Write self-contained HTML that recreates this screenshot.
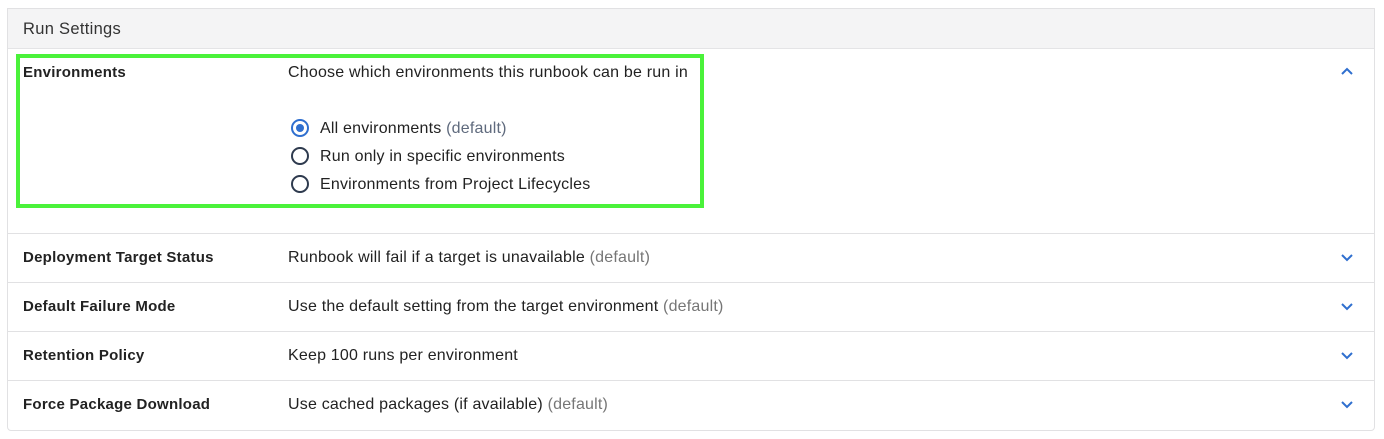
<!DOCTYPE html>
<html><head><style>
body{margin:0;background:#fff;font-family:"Liberation Sans",Arial,sans-serif;color:#222;font-size:16px;letter-spacing:0.2px;}
.card{position:absolute;left:7px;top:8px;width:1368px;height:423px;border:1px solid #e1e1e3;border-radius:0 0 4px 4px;box-sizing:border-box;}
.hdr{position:absolute;left:0;top:0;right:0;height:39px;background:#f4f4f5;border-bottom:1px solid #e4e4e6;}
.hdr span{position:absolute;left:15px;top:11px;font-size:16.5px;color:#333;letter-spacing:0.3px;}
.t{position:absolute;white-space:nowrap;}
.b{font-weight:bold;color:#222;font-size:15px;letter-spacing:0.25px;}
.g{color:#767676;}
.line{position:absolute;left:0;right:0;height:1px;background:#e1e1e3;}
.green{position:absolute;left:16px;top:54px;width:688px;height:154px;border:4px solid #4af23a;box-sizing:border-box;}
.radio{position:absolute;width:18px;height:18px;border:2px solid #2e3a4e;border-radius:50%;box-sizing:border-box;}
.radio.on{border-color:#2f6fcf;}
.radio.on::after{content:"";position:absolute;left:3px;top:3px;width:8px;height:8px;border-radius:50%;background:#2f6fcf;}
svg{position:absolute;}
</style></head><body>
<div class="card">
<div class="hdr"><span>Run Settings</span></div>
<div class="line" style="top:224px"></div>
<div class="line" style="top:273px"></div>
<div class="line" style="top:322px"></div>
<div class="line" style="top:371px"></div>
</div>
<div class="green"></div>
<div class="t b" style="left:23px;top:64px">Environments</div>
<div class="t" style="left:288px;top:64px">Choose which environments this runbook can be run in</div>
<div class="radio on" style="left:291px;top:119px"></div>
<div class="t" style="left:320px;top:120px">All environments <span style="color:#5f6a7d">(default)</span></div>
<div class="radio" style="left:291px;top:147px"></div>
<div class="t" style="left:320px;top:148px">Run only in specific environments</div>
<div class="radio" style="left:291px;top:175px"></div>
<div class="t" style="left:320px;top:176px">Environments from Project Lifecycles</div>
<svg style="left:1340px;top:67px" width="14" height="10"><path d="M2 7 L7 2 L12 7" fill="none" stroke="#2f6fcf" stroke-width="2"/></svg>

<div class="t b" style="left:23px;top:249px">Deployment Target Status</div>
<div class="t" style="left:288px;top:249px">Runbook will fail if a target is unavailable <span class="g">(default)</span></div>
<svg style="left:1340px;top:252px" width="14" height="10"><path d="M2 3 L7 8 L12 3" fill="none" stroke="#2f6fcf" stroke-width="2"/></svg>

<div class="t b" style="left:23px;top:298px">Default Failure Mode</div>
<div class="t" style="left:288px;top:298px">Use the default setting from the target environment <span class="g">(default)</span></div>
<svg style="left:1340px;top:301px" width="14" height="10"><path d="M2 3 L7 8 L12 3" fill="none" stroke="#2f6fcf" stroke-width="2"/></svg>

<div class="t b" style="left:23px;top:347px">Retention Policy</div>
<div class="t" style="left:288px;top:347px">Keep 100 runs per environment</div>
<svg style="left:1340px;top:350px" width="14" height="10"><path d="M2 3 L7 8 L12 3" fill="none" stroke="#2f6fcf" stroke-width="2"/></svg>

<div class="t b" style="left:23px;top:396px">Force Package Download</div>
<div class="t" style="left:288px;top:396px">Use cached packages (if available) <span class="g">(default)</span></div>
<svg style="left:1340px;top:399px" width="14" height="10"><path d="M2 3 L7 8 L12 3" fill="none" stroke="#2f6fcf" stroke-width="2"/></svg>
</body></html>
